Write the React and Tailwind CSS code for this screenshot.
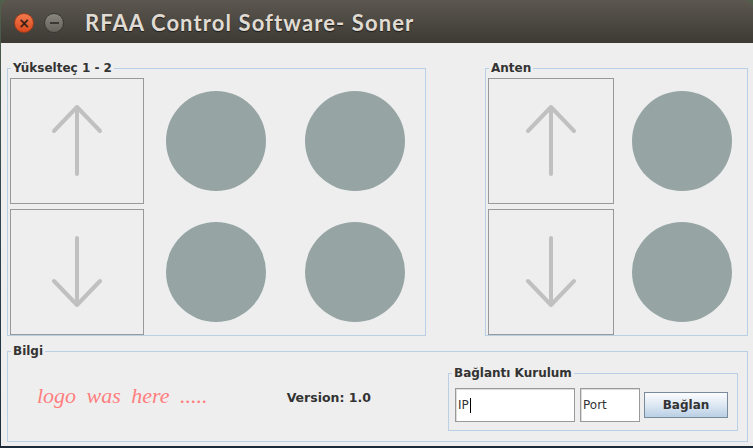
import React from 'react';

const ui = "font-['DejaVu_Sans','Liberation_Sans',sans-serif]";

const Arrow = ({ dir }) => (
  <svg width="52" height="72" viewBox="0 0 52 72" fill="none" stroke="#c0c0c0" strokeWidth="4" strokeLinecap="round" strokeLinejoin="round">
    {dir === 'up' ? (
      <path d="M26 3 V70 M3 27 L26 3 L49 27" />
    ) : (
      <path d="M26 2 V69 M3 45 L26 69 L49 45" />
    )}
  </svg>
);

const ArrowButton = ({ dir, w }) => (
  <div
    className={`${w} h-[126px] shrink-0 border border-[#999999] bg-[#eeeeee] flex justify-center items-start ${
      dir === 'up' ? 'pt-[25px]' : 'pt-[26px]'
    }`}
  >
    <Arrow dir={dir} />
  </div>
);

const Led = ({ ml }) => <div className={`${ml} w-[100px] h-[100px] shrink-0 rounded-full bg-[#96a5a4]`} />;

const Legend = ({ children }) => (
  <legend className={`ml-[3px] px-[2px] text-[12px] leading-[14px] font-bold text-[#333333] ${ui}`}>{children}</legend>
);

export default function App() {
  return (
    <div className="w-[753px] h-[448px] bg-gradient-to-b from-[#51604a] via-[#2f4350] to-[#1c2b37] overflow-hidden">
      <div className="ml-[1px] w-[752px] h-[446px] rounded-t-[8px] overflow-hidden flex flex-col">
        {/* title bar */}
        <div className="h-[43px] shrink-0 bg-gradient-to-b from-[#5c5850] to-[#3d3a35] flex items-center pl-[13px] pt-[2px]">
          <div className="w-[20px] h-[20px] rounded-full bg-gradient-to-b from-[#f27a4e] to-[#d9481b] border border-[#9c3a1a] flex items-center justify-center text-[#3b2015] text-[14px] leading-none font-bold font-['DejaVu_Sans',sans-serif]">
            ×
          </div>
          <div className="ml-[10px] w-[20px] h-[20px] rounded-full bg-gradient-to-b from-[#8a8781] to-[#65625c] border border-[#3a3834] flex items-center justify-center">
            <div className="w-[9px] h-[2px] bg-[#3a3834]" />
          </div>
          <div className="ml-[21px] text-[22px] leading-none font-bold tracking-[1.1px] text-[#e0dcd3] font-['Lato','Open_Sans',sans-serif] [text-shadow:0_1px_1px_#1e1c1a]">
            RFAA Control Software- Soner
          </div>
        </div>

        {/* body */}
        <div className={`flex-1 bg-[#eeeeee] pl-[6px] pr-[5px] pt-[18px] ${ui}`}>
          <div className="flex justify-between">
            <fieldset className="w-[419px] border border-[#b8cfe5]">
              <Legend>Yükselteç 1 - 2</Legend>
              <div className="flex flex-col gap-[5px] pl-[2px] pt-[3px]">
                <div className="flex items-center">
                  <ArrowButton dir="up" w="w-[134px]" />
                  <Led ml="ml-[22px]" />
                  <Led ml="ml-[39px]" />
                </div>
                <div className="flex items-center">
                  <ArrowButton dir="down" w="w-[134px]" />
                  <Led ml="ml-[22px]" />
                  <Led ml="ml-[39px]" />
                </div>
              </div>
            </fieldset>

            <fieldset className="w-[263px] border border-[#b8cfe5]">
              <Legend>Anten</Legend>
              <div className="flex flex-col gap-[5px] pl-[2px] pt-[3px]">
                <div className="flex items-center">
                  <ArrowButton dir="up" w="w-[126px]" />
                  <Led ml="ml-[18px]" />
                </div>
                <div className="flex items-center">
                  <ArrowButton dir="down" w="w-[126px]" />
                  <Led ml="ml-[18px]" />
                </div>
              </div>
            </fieldset>
          </div>

          <fieldset className="mt-[8px] h-[98px] border border-[#b8cfe5]">
            <Legend>Bilgi</Legend>
            <div className="flex items-start">
              <div className="ml-[29px] mt-[26px] text-[22px] leading-[24px] italic text-[#ff7f7f] font-['Liberation_Serif','DejaVu_Serif',serif] [word-spacing:5px]">
                logo was here .....
              </div>
              <div className="ml-[79px] mt-[33px] text-[12.5px] leading-[14px] font-bold text-[#333333]">Version: 1.0</div>
              <fieldset className="ml-auto mr-[9px] mt-[8px] w-[290px] h-[65px] border border-[#b8cfe5]">
                <Legend>Bağlantı Kurulum</Legend>
                <div className="flex items-center pl-[6px] pt-[8px]">
                  <div className="w-[120px] h-[34px] border border-[#9a9a9a] bg-white shadow-[inset_1px_1px_0_#dcdcdc] flex items-center pl-[2px] text-[12px] text-[#333333]">
                    IP<span className="ml-[1px] w-px h-[15px] bg-black" />
                  </div>
                  <div className="ml-[5px] w-[60px] h-[34px] border border-[#9a9a9a] bg-white shadow-[inset_1px_1px_0_#dcdcdc] flex items-center pl-[2px] text-[12px] text-[#333333]">
                    Port
                  </div>
                  <button className="ml-[4px] w-[84px] h-[26px] border border-[#7a8a9b] bg-gradient-to-b from-[#fbfcfe] via-[#dde8f3] to-[#b9cfe4] text-[12px] font-bold text-[#333333] flex items-center justify-center">
                    Bağlan
                  </button>
                </div>
              </fieldset>
            </div>
          </fieldset>
        </div>
      </div>
    </div>
  );
}
